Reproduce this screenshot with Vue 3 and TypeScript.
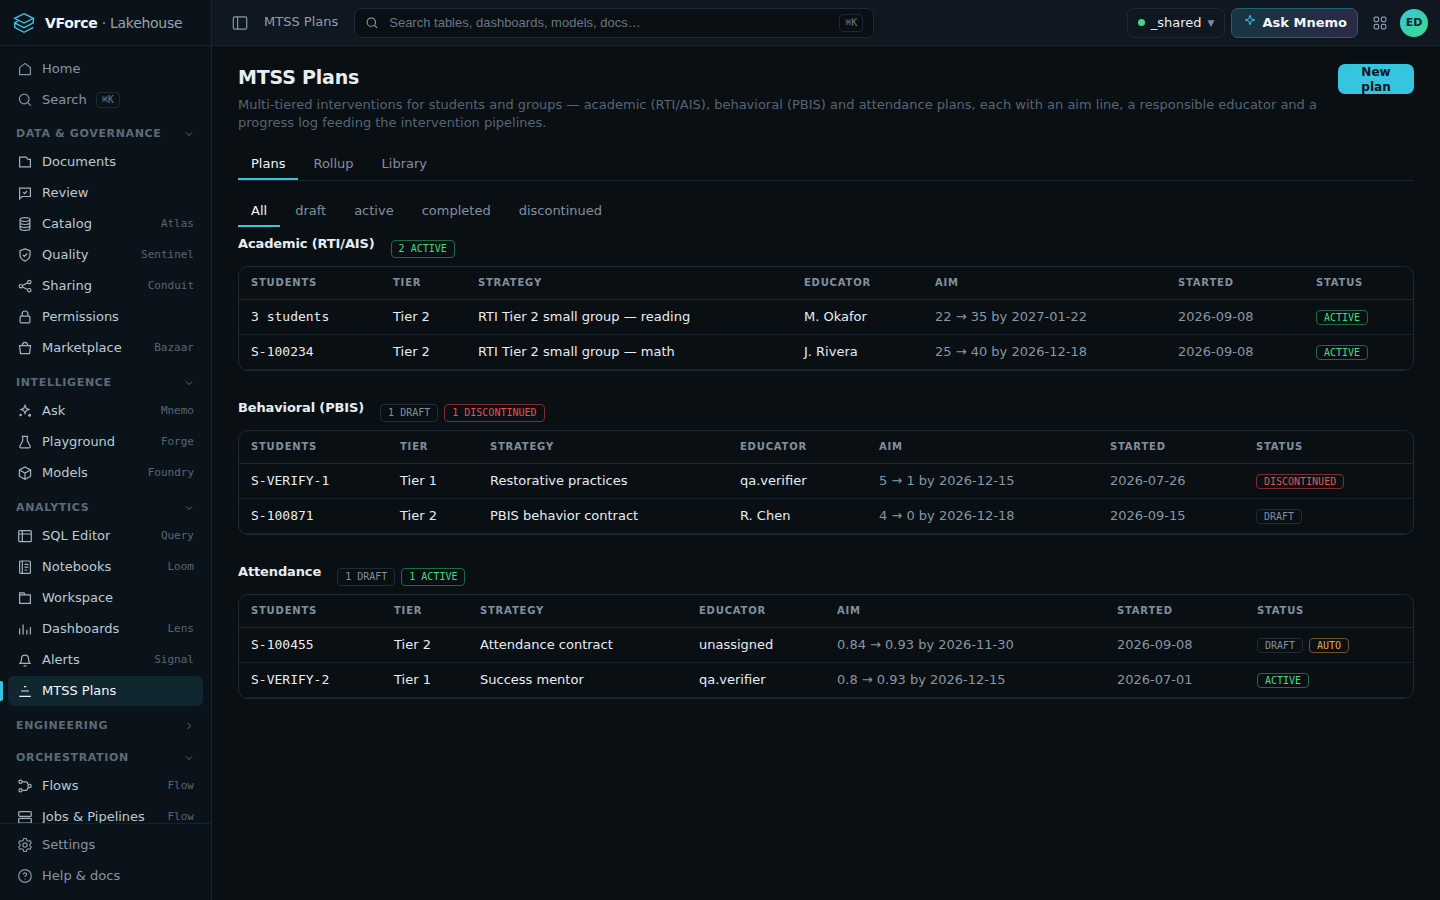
<script setup lang="ts">
import { ref } from 'vue'

interface NavItem { label: string; icon: string; code?: string; kbd?: string; active?: boolean }
interface NavGroup { title: string; open: boolean; items: NavItem[] }
interface Badge { text: string; tone: 'ok' | 'bad' | 'mute' | 'warn' }
interface Plan { who: string; tier: string; strategy: string; educator: string; aim: string; started: string; status: Badge[] }
interface PlanSection { title: string; counts: Badge[]; cols: number[]; rows: Plan[] }

const icons: Record<string, string> = {
  home: '<path d="M2.6 6.6 8 2.4l5.4 4.2v7H2.6z"/>',
  search: '<circle cx="7.2" cy="7" r="4.8"/><path d="m10.8 10.6 3 3"/>',
  doc: '<path d="M2.6 3.1h6.6l2 2.2h2.2v7.6H2.6z"/>',
  review: '<path d="M2.6 3.1h10.8v8.4H5.2l-2.6 2.3z"/><path d="m6.2 7.2 1.4 1.4 2.4-2.6"/>',
  catalog: '<ellipse cx="8" cy="3.6" rx="4.9" ry="1.9"/><path d="M3.1 3.6v8.8c0 1 2.2 1.9 4.9 1.9s4.9-.9 4.9-1.9V3.6M3.1 6.6c0 1 2.2 1.9 4.9 1.9s4.9-.9 4.9-1.9M3.1 9.5c0 1 2.2 1.9 4.9 1.9s4.9-.9 4.9-1.9"/>',
  shield: '<path d="m8 1.9 5 1.8v4.1c0 3-2 5.1-5 6.3-3-1.2-5-3.3-5-6.3V3.7z"/><path d="m5.9 8 1.5 1.5 2.8-3"/>',
  share: '<circle cx="3.8" cy="8.2" r="1.7"/><circle cx="12.3" cy="4.1" r="1.7"/><circle cx="12.3" cy="12.2" r="1.7"/><path d="m5.4 7.5 5.3-2.6M5.4 9l5.3 2.5"/>',
  lock: '<rect x="3.1" y="7.1" width="9.8" height="6.8" rx="1.2"/><path d="M5.1 7V4.9a2.9 2.9 0 0 1 5.8 0V7"/>',
  bag: '<path d="M2.5 5.7h11l-1 7.9h-9z"/><path d="M5.3 5.6a2.7 3.2 0 0 1 5.4 0"/>',
  sparkle: '<path d="m8 2.3 1.2 2.9L12 6.4 9.2 7.6 8 10.500 6.8 7.6 4 6.4l2.8-1.2z"/><circle cx="3.600" cy="12" r=".7" fill="currentColor"/><circle cx="12.600" cy="12.200" r=".9" fill="currentColor"/>',
  flask: '<path d="M4.800 2.300h6.400M5.700 2.300v4.500L2.900 12q-.7 1.700 1 1.800h8.200q1.700-.1 1-1.800l-2.800-5.200V2.300"/>',
  cube: '<path d="m8 2 5.600 2.900v6.300L8 14.200l-5.600-3V4.900zM2.400 5 8 8l5.600-3M8 8v6.200"/>',
  sql: '<rect x="1.700" y="2.700" width="12.600" height="11" rx="1"/><path d="M1.700 6h12.600M5.300 2.700v11"/>',
  notebook: '<rect x="2.600" y="2" width="10.800" height="12.400" rx="1"/><path d="M5.300 2v12.400M7.500 5.300h4M7.500 8.200h4M7.500 11h2.800"/>',
  folder: '<path d="M2.600 13.300V2.900h4.300l1.400 2h5.100v8.400zM2.600 4.900h5.700"/>',
  bars: '<path d="M2.600 7.500v6M6.100 3.500v10M9.900 8.700v4.800M13.400 6.200v7.300"/>',
  bell: '<path d="M3.200 11.300c1.100-1 1.300-2.200 1.300-4.700a3.500 3.500 0 0 1 7 0c0 2.500.2 3.700 1.300 4.700zM6.500 13.900h3"/>',
  mtss: '<path d="M7 3.600h2.200M4.200 8h7.600M2.200 13.400h11.600"/>',
  flow: '<circle cx="3.500" cy="3.800" r="1.600"/><circle cx="3.500" cy="12.300" r="1.600"/><circle cx="12.600" cy="8" r="1.600"/><path d="M5.100 3.800h3.700q1.800 0 2.300 2.900M5.100 12.300h3.700q1.800 0 2.300-2.900"/>',
  jobs: '<rect x="1.700" y="2.600" width="12.600" height="4.800" rx="1"/><rect x="1.700" y="9.400" width="12.600" height="4.800" rx="1"/>',
  gear: '<circle cx="8" cy="8" r="2.100"/><path d="M6.700 1.500h2.600l.4 1.900 1.400.8 1.900-.6 1.300 2.200-1.400 1.400v1.600l1.400 1.400-1.300 2.200-1.900-.6-1.400.8-.4 1.900H6.700l-.4-1.900-1.400-.8-1.900.6-1.300-2.200 1.400-1.400V7.200L1.700 5.800 3 3.600l1.900.6 1.400-.8z"/>',
  help: '<circle cx="8" cy="8" r="6.300"/><path d="M6.300 6.500q.1-1.600 1.700-1.600t1.700 1.500q0 1-1 1.400-.7.300-.7 1.100M8 10.700v.7"/>',
}

const topItems: NavItem[] = [
  { label: 'Home', icon: 'home' },
  { label: 'Search', icon: 'search', kbd: '⌘K' },
]
const groups = ref<NavGroup[]>([
  { title: 'Data & Governance', open: true, items: [
    { label: 'Documents', icon: 'doc' },
    { label: 'Review', icon: 'review' },
    { label: 'Catalog', icon: 'catalog', code: 'Atlas' },
    { label: 'Quality', icon: 'shield', code: 'Sentinel' },
    { label: 'Sharing', icon: 'share', code: 'Conduit' },
    { label: 'Permissions', icon: 'lock' },
    { label: 'Marketplace', icon: 'bag', code: 'Bazaar' },
  ] },
  { title: 'Intelligence', open: true, items: [
    { label: 'Ask', icon: 'sparkle', code: 'Mnemo' },
    { label: 'Playground', icon: 'flask', code: 'Forge' },
    { label: 'Models', icon: 'cube', code: 'Foundry' },
  ] },
  { title: 'Analytics', open: true, items: [
    { label: 'SQL Editor', icon: 'sql', code: 'Query' },
    { label: 'Notebooks', icon: 'notebook', code: 'Loom' },
    { label: 'Workspace', icon: 'folder' },
    { label: 'Dashboards', icon: 'bars', code: 'Lens' },
    { label: 'Alerts', icon: 'bell', code: 'Signal' },
    { label: 'MTSS Plans', icon: 'mtss', active: true },
  ] },
  { title: 'Engineering', open: false, items: [] },
  { title: 'Orchestration', open: true, items: [
    { label: 'Flows', icon: 'flow', code: 'Flow' },
    { label: 'Jobs & Pipelines', icon: 'jobs', code: 'Flow' },
  ] },
])
const footItems: NavItem[] = [
  { label: 'Settings', icon: 'gear' },
  { label: 'Help & docs', icon: 'help' },
]

const views = ['Plans', 'Rollup', 'Library']
const view = ref('Plans')
const filters = ['All', 'draft', 'active', 'completed', 'discontinued']
const filter = ref('All')
const query = ref('')

const headings = ['Students', 'Tier', 'Strategy', 'Educator', 'Aim', 'Started', 'Status']
const active: Badge = { text: 'ACTIVE', tone: 'ok' }
const draft: Badge = { text: 'DRAFT', tone: 'mute' }
const sections: PlanSection[] = [
  { title: 'Academic (RTI/AIS)', counts: [{ text: '2 ACTIVE', tone: 'ok' }],
    cols: [142, 85, 326, 131, 243, 138, 109],
    rows: [
      { who: '3 students', tier: 'Tier 2', strategy: 'RTI Tier 2 small group — reading', educator: 'M. Okafor', aim: '22 → 35 by 2027-01-22', started: '2026-09-08', status: [active] },
      { who: 'S-100234', tier: 'Tier 2', strategy: 'RTI Tier 2 small group — math', educator: 'J. Rivera', aim: '25 → 40 by 2026-12-18', started: '2026-09-08', status: [active] },
    ] },
  { title: 'Behavioral (PBIS)', counts: [{ text: '1 DRAFT', tone: 'mute' }, { text: '1 DISCONTINUED', tone: 'bad' }],
    cols: [149, 90, 250, 139, 231, 146, 169],
    rows: [
      { who: 'S-VERIFY-1', tier: 'Tier 1', strategy: 'Restorative practices', educator: 'qa.verifier', aim: '5 → 1 by 2026-12-15', started: '2026-07-26', status: [{ text: 'DISCONTINUED', tone: 'bad' }] },
      { who: 'S-100871', tier: 'Tier 2', strategy: 'PBIS behavior contract', educator: 'R. Chen', aim: '4 → 0 by 2026-12-18', started: '2026-09-15', status: [draft] },
    ] },
  { title: 'Attendance', counts: [{ text: '1 DRAFT', tone: 'mute' }, { text: '1 ACTIVE', tone: 'ok' }],
    cols: [143, 86, 219, 138, 280, 140, 168],
    rows: [
      { who: 'S-100455', tier: 'Tier 2', strategy: 'Attendance contract', educator: 'unassigned', aim: '0.84 → 0.93 by 2026-11-30', started: '2026-09-08', status: [draft, { text: 'AUTO', tone: 'warn' }] },
      { who: 'S-VERIFY-2', tier: 'Tier 1', strategy: 'Success mentor', educator: 'qa.verifier', aim: '0.8 → 0.93 by 2026-12-15', started: '2026-07-01', status: [active] },
    ] },
]
const share = (cols: number[], w: number) => `${(w / cols.reduce((a, b) => a + b, 0)) * 100}%`
</script>

<template>
  <div class="app">
    <aside class="side">
      <a class="brand" href="#">
        <svg class="logo" viewBox="0 0 22 22" aria-hidden="true">
          <path d="M11 1.700 20.300 6.300 11 11 1.700 6.300z" />
          <path d="M20.300 6.300v4.500L11 15.700l-9.300-4.900v4.500l9.300 5 9.300-5M1.700 10.800l3.300-2" />
        </svg>
        <span><b>VForce</b> · Lakehouse</span>
      </a>
      <nav class="nav">
        <div class="list top">
          <a v-for="i in topItems" :key="i.label" class="item dim" href="#">
            <svg class="ico" viewBox="0 0 16 16" v-html="icons[i.icon]" />
            <span>{{ i.label }}</span>
            <kbd v-if="i.kbd">{{ i.kbd }}</kbd>
          </a>
        </div>
        <div v-for="g in groups" :key="g.title">
          <button class="group" type="button" :aria-expanded="g.open" @click="g.open = !g.open">
            <span>{{ g.title }}</span>
            <svg viewBox="0 0 10 10"><path :d="g.open ? 'M2 3.500 5 6.500l3-3' : 'm3.500 2 3 3-3 3'" /></svg>
          </button>
          <div v-if="g.open" class="list">
            <a v-for="i in g.items" :key="i.label" class="item" :class="{ on: i.active }" href="#">
              <svg class="ico" viewBox="0 0 16 16" v-html="icons[i.icon]" />
              <span>{{ i.label }}</span>
              <span v-if="i.code" class="code">{{ i.code }}</span>
            </a>
          </div>
        </div>
      </nav>
      <div class="foot">
        <a v-for="i in footItems" :key="i.label" class="item dim" href="#">
          <svg class="ico" viewBox="0 0 16 16" v-html="icons[i.icon]" />
          <span>{{ i.label }}</span>
        </a>
      </div>
    </aside>

    <div class="body">
      <header class="bar">
        <button class="plain" type="button" aria-label="Toggle sidebar">
          <svg class="ico" viewBox="0 0 16 16"><rect x="1.300" y="1.800" width="13.400" height="12.400" rx="1.500" /><path d="M5.600 1.800v12.400" /></svg>
        </button>
        <span class="crumb">MTSS Plans</span>
        <label class="find">
          <svg class="ico" viewBox="0 0 16 16" v-html="icons.search" />
          <input v-model="query" type="text" aria-label="Search" placeholder="Search tables, dashboards, models, docs…" />
          <kbd>⌘K</kbd>
        </label>
        <div class="tools">
          <button class="space" type="button"><i class="dot" />_shared<small>▼</small></button>
          <button class="mnemo" type="button">
            <svg viewBox="0 0 12 12"><path d="m6 1.300 1.200 3.500L10.700 6 7.200 7.200 6 10.700 4.800 7.200 1.300 6l3.500-1.200z" /></svg>
            Ask Mnemo
          </button>
          <button class="plain grid" type="button" aria-label="Apps">
            <svg class="ico" viewBox="0 0 16 16"><rect x="2.200" y="2.200" width="4.400" height="4.400" rx="1" /><rect x="9.400" y="2.200" width="4.400" height="4.400" rx="1" /><rect x="2.200" y="9.400" width="4.400" height="4.400" rx="1" /><rect x="9.400" y="9.400" width="4.400" height="4.400" rx="1" /></svg>
          </button>
          <button class="avatar" type="button">ED</button>
        </div>
      </header>

      <main class="page">
        <div class="head">
          <div class="intro">
            <h1>MTSS Plans</h1>
            <p>Multi-tiered interventions for students and groups — academic (RTI/AIS), behavioral (PBIS) and attendance plans, each with an aim line, a responsible educator and a progress log feeding the intervention pipelines.</p>
          </div>
          <button class="new" type="button">New plan</button>
        </div>

        <div class="tabs lined" role="tablist">
          <button v-for="v in views" :key="v" role="tab" type="button" :class="{ on: v === view }" :aria-selected="v === view" @click="view = v">{{ v }}</button>
        </div>
        <div class="tabs filters" role="tablist">
          <button v-for="f in filters" :key="f" role="tab" type="button" :class="{ on: f === filter }" :aria-selected="f === filter" @click="filter = f">{{ f }}</button>
        </div>

        <section v-for="s in sections" :key="s.title" class="plans">
          <div class="title">
            <h2>{{ s.title }}</h2>
            <div class="counts"><span v-for="c in s.counts" :key="c.text" class="badge big" :class="c.tone">{{ c.text }}</span></div>
          </div>
          <div class="card">
            <table>
              <colgroup><col v-for="(w, n) in s.cols" :key="n" :style="{ width: share(s.cols, w) }" /></colgroup>
              <thead><tr><th v-for="h in headings" :key="h" scope="col">{{ h }}</th></tr></thead>
              <tbody>
                <tr v-for="r in s.rows" :key="r.who">
                  <td class="mono">{{ r.who }}</td>
                  <td>{{ r.tier }}</td>
                  <td>{{ r.strategy }}</td>
                  <td>{{ r.educator }}</td>
                  <td class="soft">{{ r.aim }}</td>
                  <td class="soft">{{ r.started }}</td>
                  <td><div class="counts"><span v-for="b in r.status" :key="b.text" class="badge" :class="b.tone">{{ b.text }}</span></div></td>
                </tr>
              </tbody>
            </table>
          </div>
        </section>
      </main>
    </div>
  </div>
</template>

<style>
body { background: #0a0f13; }
</style>

<style scoped>
.app {
  display: flex;
  height: 100vh;
  background: #0a0f13;
  color: #e6edf3;
  font: 13px/18px "DejaVu Sans", sans-serif;
}
.app *, .app *::before { box-sizing: border-box; }
a { color: inherit; text-decoration: none; }
button { font: inherit; color: inherit; background: none; border: 0; padding: 0; cursor: pointer; }
svg { fill: none; stroke: currentColor; flex: none; }
.ico { width: 16px; height: 16px; stroke-width: 1.2; }
kbd {
  font: 10px/14px "DejaVu Sans Mono", monospace;
  color: #667685;
  border: 1px solid #1c2833;
  border-radius: 4px;
  padding: 0 5px;
}

.side {
  display: flex;
  flex-direction: column;
  flex: 0 0 212px;
  min-height: 0;
  background: #0b131a;
  border-right: 1px solid #1a2733;
}
.brand {
  display: flex;
  align-items: center;
  gap: 10px;
  flex: 0 0 46px;
  padding: 0 13px;
  border-bottom: 1px solid #15212b;
  color: #93a3b1;
  font-size: 14px;
  letter-spacing: -0.02em;
}
.brand b { color: #f2f6fa; }
.logo { width: 22px; height: 22px; color: #35c5e0; stroke-width: 1.4; }
.nav { flex: 1; min-height: 0; overflow-y: auto; scrollbar-width: none; padding: 8px 8px 0; }
.list { display: flex; flex-direction: column; gap: 1px; padding-bottom: 1px; }
.list.top { padding-bottom: 0; }
.item {
  position: relative;
  display: flex;
  align-items: center;
  gap: 9px;
  height: 30px;
  flex: none;
  padding: 0 9px;
  border-radius: 6px;
  color: #bdc9d3;
}
.item .ico { color: #a3b1bd; }
.item.dim, .item.dim .ico { color: #8695a3; }
.item.on { background: #112730; color: #f2f6fa; }
.item.on .ico { color: #e6edf3; }
.item.on::before {
  content: "";
  position: absolute;
  left: -8px;
  top: 5px;
  width: 3px;
  height: 20px;
  border-radius: 0 2px 2px 0;
  background: #35c5e0;
}
.code { margin-left: auto; font: 11px/16px "DejaVu Sans Mono", monospace; color: #566573; }
.group {
  display: flex;
  align-items: center;
  justify-content: space-between;
  width: 100%;
  height: 32px;
  padding: 5px 9px 0 8px;
  font-size: 11px;
  font-weight: 700;
  letter-spacing: 0.06em;
  text-transform: uppercase;
  color: #5c6b79;
}
.group svg { width: 10px; height: 10px; }
.foot {
  display: flex;
  flex-direction: column;
  gap: 1px;
  flex: none;
  padding: 6px 8px 9px;
  border-top: 1px solid #15212b;
}

.body { display: flex; flex-direction: column; flex: 1; min-width: 0; }
.bar {
  display: flex;
  align-items: center;
  flex: 0 0 46px;
  padding: 0 12px 0 20px;
  background: #0f1720;
  border-bottom: 1px solid #1a2733;
}
.plain { display: flex; color: #8695a3; }
.crumb { margin: 0 16px 2px 16px; color: #8f9eac; white-space: nowrap; }
.find {
  display: flex;
  align-items: center;
  flex: 0 1 520px;
  min-width: 0;
  height: 30px;
  padding: 0 10px;
  gap: 10px;
  background: #0a0f13;
  border: 1px solid #1c2a36;
  border-radius: 7px;
}
.find .ico { width: 14px; height: 14px; color: #93a3b1; }
.find input {
  flex: 1;
  min-width: 0;
  padding: 0;
  border: 0;
  outline: 0;
  background: none;
  color: #e6edf3;
  font: 13px/18px "Liberation Sans", sans-serif;
}
.find input::placeholder { color: #667685; opacity: 1; }
.find kbd { line-height: 16px; }
.tools { display: flex; align-items: center; margin-left: auto; }
.space, .mnemo {
  display: flex;
  align-items: center;
  height: 30px;
  border: 1px solid #1c2833;
  border-radius: 7px;
  white-space: nowrap;
}
.space { gap: 6px; padding: 0 9px 0 10px; margin-right: 6px; }
.space small { font-size: 9px; color: #7d8c9a; }
.dot { width: 7px; height: 7px; border-radius: 50%; background: #3ddc84; }
.mnemo {
  gap: 7px;
  padding: 0 10px 0 12px;
  font-weight: 700;
  border-color: #256174;
  background: linear-gradient(100deg, #173642, #2a2a47);
  color: #f2f6fa;
}
.mnemo svg { width: 12px; height: 12px; margin-bottom: 5px; color: #35c5e0; }
.grid { margin: 0 12px 0 14px; }
.avatar {
  width: 28px;
  height: 28px;
  border-radius: 50%;
  background: linear-gradient(135deg, #35c5e0, #3ddc84);
  color: #06222a;
  font-size: 11px;
  font-weight: 700;
}

.page { flex: 1; min-height: 0; overflow-y: auto; padding: 18px 26px; }
.head { display: flex; align-items: flex-start; gap: 16px; margin-bottom: 16px; }
.intro { flex: 1; }
h1, h2, p { margin: 0; }
h1 { font-size: 19px; line-height: 26px; letter-spacing: -0.01em; }
.intro p { margin-top: 6px; color: #566573; }
.new {
  width: 76px;
  height: 30px;
  padding: 1px 14px 0;
  border-radius: 7px;
  background: #35c5e0;
  color: #06161c;
  font-size: 12px;
  font-weight: 700;
  line-height: 15px;
}
.tabs { display: flex; gap: 2px; }
.tabs.lined { border-bottom: 1px solid #1a2733; }
.tabs.filters { margin: 14px 0 9px; }
.tabs button { height: 32px; padding: 2px 13px 0; border-bottom: 2px solid transparent; color: #8090a0; }
.tabs button.on { color: #f2f6fa; border-color: #35c5e0; }

.plans { margin-bottom: 29px; }
.title { display: flex; gap: 16px; height: 22px; margin-bottom: 8px; }
h2 { font-size: 13px; line-height: 16px; letter-spacing: -0.01em; }
.title .counts { align-self: flex-end; }
.counts { display: flex; gap: 6px; }
.badge {
  padding: 0 7px;
  border: 1px solid;
  border-radius: 4px;
  font: 10px/13px "DejaVu Sans Mono", monospace;
}
.badge.big { line-height: 16px; }
.ok { color: #3ddc84; border-color: #1c6a45; }
.bad { color: #e5534b; border-color: #7a2e2f; }
.mute { color: #8090a0; border-color: #1f2b36; }
.warn { color: #e8a33d; border-color: #6f5227; }
.card { border: 1px solid #1c2a36; border-radius: 10px; overflow: hidden; }
table { width: 100%; table-layout: fixed; border-collapse: separate; border-spacing: 0; }
th, td { padding: 0 12px; text-align: left; vertical-align: middle; white-space: nowrap; }
th {
  height: 33px;
  border-bottom: 1px solid #1c2a36;
  color: #8090a0;
  font-size: 10px;
  letter-spacing: 0.08em;
  text-transform: uppercase;
}
td { height: 35px; border-bottom: 1px solid #16212b; }
.mono { font-family: "DejaVu Sans Mono", monospace; }
.soft { color: #8796a4; }
</style>
